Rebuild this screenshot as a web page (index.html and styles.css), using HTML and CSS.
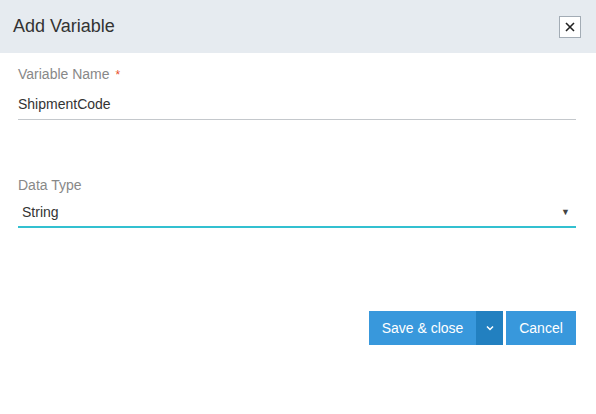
FILE: index.html
```html
<!DOCTYPE html>
<html>
<head>
<meta charset="utf-8">
<link rel="stylesheet" href="styles.css">
</head>
<body>
<div class="dialog">
  <div class="header">
    <div class="title">Add Variable</div>
    <button class="close" aria-label="Close">
      <svg width="10" height="10" viewBox="0 0 10 10"><path d="M1 1L9 9M9 1L1 9" stroke="#222" stroke-width="1.6"/></svg>
    </button>
  </div>
  <div class="body">
    <div class="field">
      <div class="label">Variable Name <span class="req">*</span></div>
      <div class="input">ShipmentCode</div>
    </div>
    <div class="field field-type">
      <div class="label">Data Type</div>
      <div class="select">
        <span class="select-value">String</span>
        <span class="arrow">▼</span>
      </div>
    </div>
  </div>
  <div class="footer">
    <div class="split">
      <button class="btn btn-main">Save &amp; close</button>
      <button class="btn btn-caret" aria-label="More">
        <svg width="8" height="6" viewBox="0 0 8 6"><path d="M1 1.5L4 4.5L7 1.5" stroke="#fff" stroke-width="1.5" fill="none"/></svg>
      </button>
    </div>
    <button class="btn btn-cancel">Cancel</button>
  </div>
</div>
</body>
</html>
```
FILE: styles.css
```css
html, body {
  margin: 0;
  padding: 0;
  background: #fff;
  font-family: "Liberation Sans", Arial, sans-serif;
}
.dialog {
  width: 596px;
  height: 414px;
  display: flex;
  flex-direction: column;
}
.header {
  height: 53px;
  background: #e6ebf0;
  display: flex;
  align-items: center;
  justify-content: space-between;
  padding: 0 15px 0 13px;
}
.title {
  font-size: 18px;
  color: #333;
  padding-bottom: 1px;
}
.close {
  width: 22px;
  height: 22px;
  border: 1px solid #a3acb5;
  background: #fff;
  padding: 0;
  display: flex;
  align-items: center;
  justify-content: center;
  margin-top: 1px;
}
.body {
  padding: 0 20px 0 18px;
  display: flex;
  flex-direction: column;
}
.field {
  display: flex;
  flex-direction: column;
}
.label {
  font-size: 14px;
  color: #888;
  margin-top: 13px;
  line-height: 16px;
}
.req {
  color: #e8502a;
  font-size: 12px;
  margin-left: 2px;
}
.input {
  font-size: 14px;
  color: #333;
  line-height: 16px;
  margin-top: 13px;
  padding-bottom: 7px;
  border-bottom: 1px solid #c4c8cc;
}
.field-type .label {
  margin-top: 57px;
}
.select {
  display: flex;
  justify-content: space-between;
  align-items: center;
  font-size: 14px;
  color: #333;
  line-height: 16px;
  margin-top: 11px;
  padding: 0 6px 6px 4px;
  border-bottom: 2px solid #33c0d0;
}
.arrow {
  font-size: 9px;
  color: #444;
}
.footer {
  display: flex;
  justify-content: flex-end;
  gap: 3px;
  padding: 0 20px;
  margin-top: 83px;
}
.split {
  display: flex;
}
.btn {
  height: 34px;
  border: none;
  color: #fff;
  font-family: "Liberation Sans", Arial, sans-serif;
  font-size: 14px;
  background: #3898dc;
  padding: 0;
}
.btn-main {
  width: 107px;
}
.btn-caret {
  width: 27px;
  background: #2280c0;
  display: flex;
  align-items: center;
  justify-content: center;
}
.btn-cancel {
  width: 70px;
}
```
